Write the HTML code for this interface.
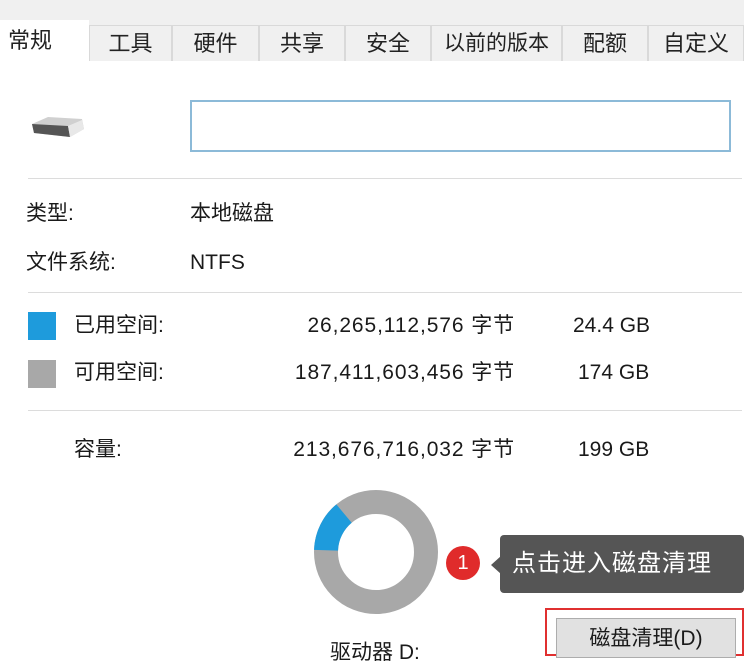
<!DOCTYPE html>
<html><head><meta charset="utf-8"><style>
*{margin:0;padding:0;box-sizing:border-box}
body{width:744px;height:656px;overflow:hidden;background:#fff;font-family:"Liberation Sans","Noto Sans CJK SC",sans-serif;color:#1a1a1a;position:relative;font-size:21px}
.a{position:absolute;white-space:nowrap;line-height:26px}
.top{position:absolute;left:0;top:0;width:744px;height:60px;background:#f0f0f0}
.tab{position:absolute;top:25px;height:36px;border:1px solid #d9d9d9;border-bottom:none;background:#f0f0f0;font-size:22px;line-height:36px;text-align:center;color:#222}
.line{position:absolute;left:28px;width:714px;height:1px;background:#dcdcdc}
.r{text-align:right;width:300px;letter-spacing:0.9px}
</style></head><body>
<div class="top"></div>
<div class="a" style="left:0;top:60px;width:744px;height:1px;background:#d9d9d9"></div>
<div class="tab" style="left:0;top:20px;width:89px;height:42px;background:#fff;border:none;line-height:42px;text-align:left;padding-left:8px">常规</div>
<div class="tab" style="left:89px;width:83px">工具</div>
<div class="tab" style="left:172px;width:87px">硬件</div>
<div class="tab" style="left:259px;width:86px">共享</div>
<div class="tab" style="left:345px;width:86px">安全</div>
<div class="tab" style="left:431px;width:131px;font-size:21px">以前的版本</div>
<div class="tab" style="left:562px;width:86px">配额</div>
<div class="tab" style="left:648px;width:96px">自定义</div>
<svg class="a" style="left:28px;top:112px" width="60" height="30"><path d="M4 12 L20 5 L54 7 L56 17 L42 25 L6 21 Z" fill="#d0d0d0"/><path d="M4 12 L40 14 L42 25 L6 21 Z" fill="#555"/><path d="M40 14 L54 8 L56 17 L42 25Z" fill="#e8e8e8"/></svg>
<div class="a" style="left:190px;top:100px;width:541px;height:52px;border:2px solid #8cbad8"></div>
<div class="line" style="top:178px"></div>
<div class="a" style="left:26px;top:201px">类型:</div>
<div class="a" style="left:190px;top:201px">本地磁盘</div>
<div class="a" style="left:26px;top:250px">文件系统:</div>
<div class="a" style="left:190px;top:250px">NTFS</div>
<div class="line" style="top:292px"></div>
<div class="a" style="left:28px;top:312px;width:28px;height:28px;background:#1e9bdc"></div>
<div class="a" style="left:74px;top:313px">已用空间:</div>
<div class="a r" style="left:215px;top:313px">26,265,112,576 字节</div>
<div class="a" style="left:573px;top:313px">24.4 GB</div>
<div class="a" style="left:28px;top:360px;width:28px;height:28px;background:#a8a8a8"></div>
<div class="a" style="left:74px;top:360px">可用空间:</div>
<div class="a r" style="left:215px;top:360px">187,411,603,456 字节</div>
<div class="a" style="left:578px;top:360px">174 GB</div>
<div class="line" style="top:410px"></div>
<div class="a" style="left:74px;top:437px">容量:</div>
<div class="a r" style="left:215px;top:437px">213,676,716,032 字节</div>
<div class="a" style="left:578px;top:437px">199 GB</div>
<svg class="a" style="left:312px;top:488px" width="128" height="128"><circle cx="64" cy="64" r="50" fill="none" stroke="#a8a8a8" stroke-width="24"/><circle cx="64" cy="64" r="50" fill="none" stroke="#1e9bdc" stroke-width="24" stroke-dasharray="42 400" transform="rotate(182 64 64)"/></svg>
<div class="a" style="left:446px;top:546px;width:34px;height:34px;border-radius:50%;background:#e02b2b;color:#fff;font-size:20px;text-align:center;line-height:34px">1</div>
<div class="a" style="left:500px;top:535px;width:244px;height:58px;background:#555;border-radius:4px;color:#fff;font-size:24px;letter-spacing:1px;line-height:58px;padding-left:12px">点击进入磁盘清理</div>
<div class="a" style="left:491px;top:556px;width:0;height:0;border-top:9px solid transparent;border-bottom:9px solid transparent;border-right:10px solid #555"></div>
<div class="a" style="left:545px;top:608px;width:199px;height:48px;border:2px solid #e03030"></div>
<div class="a" style="left:556px;top:618px;width:180px;height:40px;background:#e1e1e1;border:1px solid #adadad;text-align:center;line-height:40px;font-size:21px">磁盘清理(D)</div>
<div class="a" style="left:330px;top:640px">驱动器 D:</div>
</body></html>
